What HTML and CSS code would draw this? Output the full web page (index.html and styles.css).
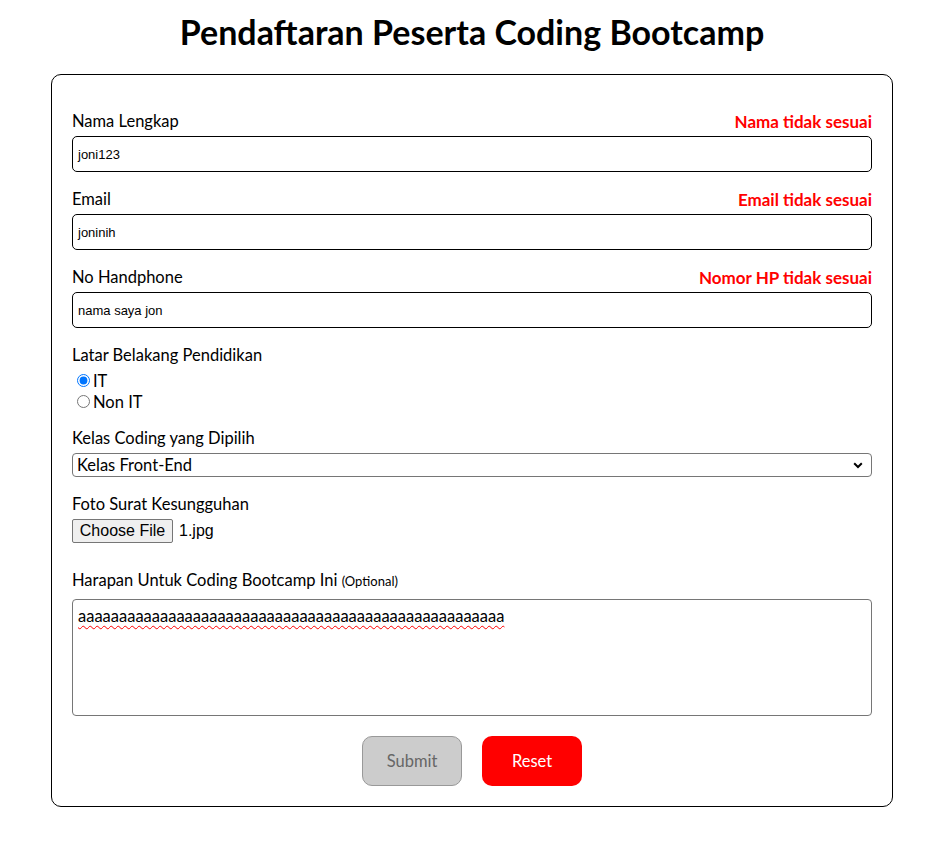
FILE: index.html
```html
<!DOCTYPE html>
<html lang="id">
<head>
<meta charset="utf-8">
<title>Pendaftaran Peserta Coding Bootcamp</title>
<link rel="stylesheet" href="styles.css">
</head>
<body>
<div class="page">
  <h1 class="title">Pendaftaran Peserta Coding Bootcamp</h1>
  <form class="card">
    <div class="group">
      <div class="label-row"><label>Nama Lengkap</label><span class="error">Nama tidak sesuai</span></div>
      <div class="text-input">joni123</div>
    </div>
    <div class="group">
      <div class="label-row"><label>Email</label><span class="error">Email tidak sesuai</span></div>
      <div class="text-input">joninih</div>
    </div>
    <div class="group">
      <div class="label-row"><label>No Handphone</label><span class="error">Nomor HP tidak sesuai</span></div>
      <div class="text-input">nama saya jon</div>
    </div>
    <div class="group radio-group">
      <div class="label-row"><label>Latar Belakang Pendidikan</label></div>
      <div class="radio-line"><input type="radio" name="bg" checked><span>IT</span></div>
      <div class="radio-line"><input type="radio" name="bg"><span>Non IT</span></div>
    </div>
    <div class="group">
      <div class="label-row"><label>Kelas Coding yang Dipilih</label></div>
      <div class="select">
        <span>Kelas Front-End</span>
        <svg class="chev" width="10" height="7" viewBox="0 0 10 7"><path d="M1.2 1.3 L5 5 L8.8 1.3" fill="none" stroke="#000" stroke-width="2"/></svg>
      </div>
    </div>
    <div class="group file-group">
      <div class="label-row"><label>Foto Surat Kesungguhan</label></div>
      <div class="file-row"><span class="file-btn">Choose File</span><span class="file-name">1.jpg</span></div>
    </div>
    <div class="group">
      <div class="label-row loose"><label>Harapan Untuk Coding Bootcamp Ini <small>(Optional)</small></label></div>
      <div class="textarea"><span class="spell">aaaaaaaaaaaaaaaaaaaaaaaaaaaaaaaaaaaaaaaaaaaaaaaaaaaa</span></div>
    </div>
    <div class="actions">
      <span class="btn btn-submit">Submit</span>
      <span class="btn btn-reset">Reset</span>
    </div>
  </form>
</div>
</body>
</html>
```
FILE: styles.css
```css
* { box-sizing: border-box; }
body {
  margin: 8px;
  font-family: Lato, "Noto Sans", sans-serif;
  color: #000;
  background: #fff;
}
.page {
  width: 842px;
  margin-left: 43px;
}
.title {
  margin: 5px 0 23px;
  font-size: 34px;
  line-height: 38px;
  font-weight: 700;
  text-align: center;
}
.card {
  border: 1px solid #000;
  border-radius: 10px;
  padding: 35px 20px 20px;
  display: flex;
  flex-direction: column;
}
.group { margin-bottom: 16px; }
.radio-group { margin-bottom: 15px; }
.label-row {
  display: flex;
  justify-content: space-between;
  font-size: 16.5px;
  line-height: 21px;
  padding-top: 1px;
  margin-bottom: 4px;
}
.label-row.loose { margin-bottom: 7px; }
.label-row small { font-size: 13px; }
.error {
  color: #ff0000;
  font-weight: 700;
  font-size: 17px;
}
.text-input {
  height: 36px;
  border: 1px solid #000;
  border-radius: 5px;
  padding: 0 5px;
  display: flex;
  align-items: center;
  font-family: "Liberation Sans", Arial, sans-serif;
  font-size: 13px;
}
.radio-line {
  display: flex;
  align-items: center;
  height: 21px;
  font-size: 16.5px;
}
.radio-line input {
  width: 13px;
  height: 13px;
  margin: 0 3px 0 5px;
}
.select {
  height: 24px;
  border: 1px solid #767676;
  border-radius: 4px;
  padding: 0 8px 0 4px;
  display: flex;
  align-items: center;
  justify-content: space-between;
  font-size: 16.5px;
}
.file-group { margin-bottom: 26px; }
.file-row {
  display: flex;
  align-items: center;
  gap: 6px;
  font-family: "Liberation Sans", Arial, sans-serif;
  font-size: 16px;
}
.file-btn {
  height: 24px;
  width: 101px;
  background: #efefef;
  border: 1px solid #767676;
  border-radius: 2px;
  display: flex;
  align-items: center;
  justify-content: center;
}
.textarea {
  height: 117px;
  border: 1px solid #767676;
  border-radius: 4px;
  padding: 6px 5px;
  font-size: 16.5px;
  line-height: 21px;
}
.spell {
  text-decoration: underline wavy #ff0000;
  text-decoration-thickness: 1px;
  text-underline-offset: 3px;
}
.actions {
  display: flex;
  justify-content: center;
  gap: 20px;
  margin-top: 4px;
}
.btn {
  width: 100px;
  height: 50px;
  border-radius: 10px;
  display: flex;
  align-items: center;
  justify-content: center;
  font-size: 16.5px;
}
.btn-submit {
  background: #cccccc;
  border: 1px solid #999999;
  color: #666666;
}
.btn-reset {
  background: #ff0000;
  color: #ffffff;
}
```
